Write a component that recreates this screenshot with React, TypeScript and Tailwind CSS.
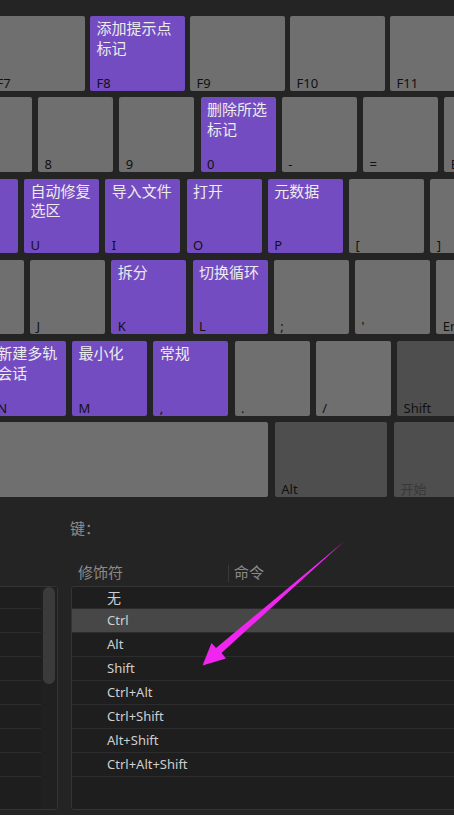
import type { ReactNode } from 'react'

type Tone = 'gray' | 'purple' | 'dark'

type KeyDef = {
  name: string
  label?: string
  tone?: Tone
  width?: string
  dim?: boolean
}

type RowDef = {
  offset: string
  gap: string
  width: string
  keys: KeyDef[]
}

const TONES: Record<Tone, string> = {
  gray: 'bg-[#6f6f6f]',
  purple: 'bg-[#744cc1]',
  dark: 'bg-[#4e4e4e]',
}

const ROWS: RowDef[] = [
  {
    offset: '-ml-[10px]',
    gap: 'gap-[5.5px]',
    width: 'w-[94.5px]',
    keys: [
      { name: 'F7' },
      { name: 'F8', label: '添加提示点标记', tone: 'purple' },
      { name: 'F9' },
      { name: 'F10' },
      { name: 'F11' },
    ],
  },
  {
    offset: '-ml-[43.25px]',
    gap: 'gap-[6.25px]',
    width: 'w-[75px]',
    keys: [
      { name: '7' },
      { name: '8' },
      { name: '9' },
      { name: '0', label: '删除所选标记', tone: 'purple' },
      { name: '-' },
      { name: '=' },
      { name: 'Backspace', width: 'w-[120px]' },
    ],
  },
  {
    offset: '-ml-[57.25px]',
    gap: 'gap-[6.25px]',
    width: 'w-[75px]',
    keys: [
      { name: 'Y', tone: 'purple' },
      { name: 'U', label: '自动修复选区', tone: 'purple' },
      { name: 'I', label: '导入文件', tone: 'purple' },
      { name: 'O', label: '打开', tone: 'purple' },
      { name: 'P', label: '元数据', tone: 'purple' },
      { name: '[' },
      { name: ']' },
    ],
  },
  {
    offset: '-ml-[51.25px]',
    gap: 'gap-[6.25px]',
    width: 'w-[75px]',
    keys: [
      { name: 'H' },
      { name: 'J' },
      { name: 'K', label: '拆分', tone: 'purple' },
      { name: 'L', label: '切换循环', tone: 'purple' },
      { name: ';' },
      { name: "'" },
      { name: 'Enter', width: 'w-[120px]' },
    ],
  },
  {
    offset: '-ml-[9.25px]',
    gap: 'gap-[6.25px]',
    width: 'w-[75px]',
    keys: [
      { name: 'N', label: '新建多轨会话', tone: 'purple' },
      { name: 'M', label: '最小化', tone: 'purple' },
      { name: ',', label: '常规', tone: 'purple' },
      { name: '.' },
      { name: '/' },
      { name: 'Shift', tone: 'dark', width: 'w-[120px]' },
    ],
  },
  {
    offset: '-ml-[100px]',
    gap: 'gap-[6.75px]',
    width: 'w-[75px]',
    keys: [
      { name: '', width: 'w-[368px]' },
      { name: 'Alt', tone: 'dark', width: 'w-[112.5px]' },
      { name: '开始', tone: 'dark', width: 'w-[120px]', dim: true },
    ],
  },
]

const MODIFIERS = ['无', 'Ctrl', 'Alt', 'Shift', 'Ctrl+Alt', 'Ctrl+Shift', 'Alt+Shift', 'Ctrl+Alt+Shift']

function Key({ k, width }: { k: KeyDef; width: string }) {
  const tone = TONES[k.tone ?? 'gray']
  return (
    <div
      className={`flex h-[74.5px] shrink-0 flex-col justify-between rounded-[2px] pb-[1px] pl-[6.5px] pr-[4px] pt-[2px] ${tone} ${k.width ?? width}`}
    >
      <span className="font-['Noto_Sans_CJK_SC',sans-serif] text-[15px] leading-[19.5px] text-[#ececec]">
        {k.label ?? ''}
      </span>
      <span
        className={`whitespace-nowrap text-[13px] leading-[14px] ${k.dim ? "font-['Noto_Sans_CJK_SC',sans-serif] text-[#383838]" : 'text-[#111111]'}`}
      >
        {k.name}
      </span>
    </div>
  )
}

function Keyboard() {
  return (
    <div className="flex flex-col gap-[6.75px] pb-[3.25px] pt-[16px]">
      {ROWS.map((row, i) => (
        <div key={i} className={`flex ${row.offset} ${row.gap}`}>
          {row.keys.map((k, j) => (
            <Key key={j} k={k} width={row.width} />
          ))}
        </div>
      ))}
    </div>
  )
}

function Row({ children, first, active }: { children?: ReactNode; first?: boolean; active?: boolean }) {
  return (
    <div
      className={`flex items-center border-b border-[#2c2c2c] ${first ? 'h-[22px]' : 'h-[24px]'} ${active ? 'bg-[#474747]' : ''}`}
    >
      {children}
    </div>
  )
}

function Bindings() {
  return (
    <div className="flex flex-col">
      <div className="pl-[70px] pt-[18px] font-['Noto_Sans_CJK_SC',sans-serif] text-[15px] leading-[20px] text-[#8c8c8c]">
        键：
      </div>

      <div className="mt-[24px] flex h-[20px] pl-[71px] font-['Noto_Sans_CJK_SC',sans-serif] text-[15px] leading-[20px] text-[#8a8a8a]">
        <span className="w-[157px] pl-[7px]">修饰符</span>
        <span className="mt-[3px] h-[17px] w-px bg-[#3a3a3a]" />
        <span className="pl-[5px]">命令</span>
      </div>

      <div className="mt-[4px] flex">
        <div className="-ml-[4px] flex h-[224px] w-[62px] overflow-hidden rounded-[3px] border border-[#343434] bg-[#1e1e1e]">
          <div className="flex w-[44px] flex-col">
            {MODIFIERS.map((m, i) => (
              <Row key={m} first={i === 0} />
            ))}
          </div>
          <div className="flex-1 bg-[#202020] px-[2px]">
            <div className="h-[97px] w-[12px] rounded-full bg-[#3b3b3b]" />
          </div>
        </div>

        <div className="-mr-[10px] ml-[13px] flex h-[224px] flex-1 flex-col overflow-hidden rounded-[3px] border border-[#343434] bg-[#1e1e1e]">
          {MODIFIERS.map((m, i) => (
            <Row key={m} first={i === 0} active={m === 'Ctrl'}>
              <span
                className={`pl-[35px] text-[#cfcfcf] ${m === '无' ? "font-['Noto_Sans_CJK_SC',sans-serif] text-[14px]" : 'text-[13px]'}`}
              >
                {m}
              </span>
            </Row>
          ))}
        </div>
      </div>
    </div>
  )
}

export default function App() {
  return (
    <div className="relative h-[815px] w-full overflow-hidden bg-[#242424] font-['Noto_Sans','Noto_Sans_CJK_SC',sans-serif]">
      <Keyboard />
      <Bindings />
      <svg
        className="pointer-events-none absolute left-0 top-0"
        width="454"
        height="815"
        viewBox="0 0 454 815"
        aria-hidden
      >
        <polygon
          points="344,541.5 221.5,653 226,658.5 202.5,665.5 211.5,643 216,648"
          fill="#f026f0"
        />
      </svg>
    </div>
  )
}
